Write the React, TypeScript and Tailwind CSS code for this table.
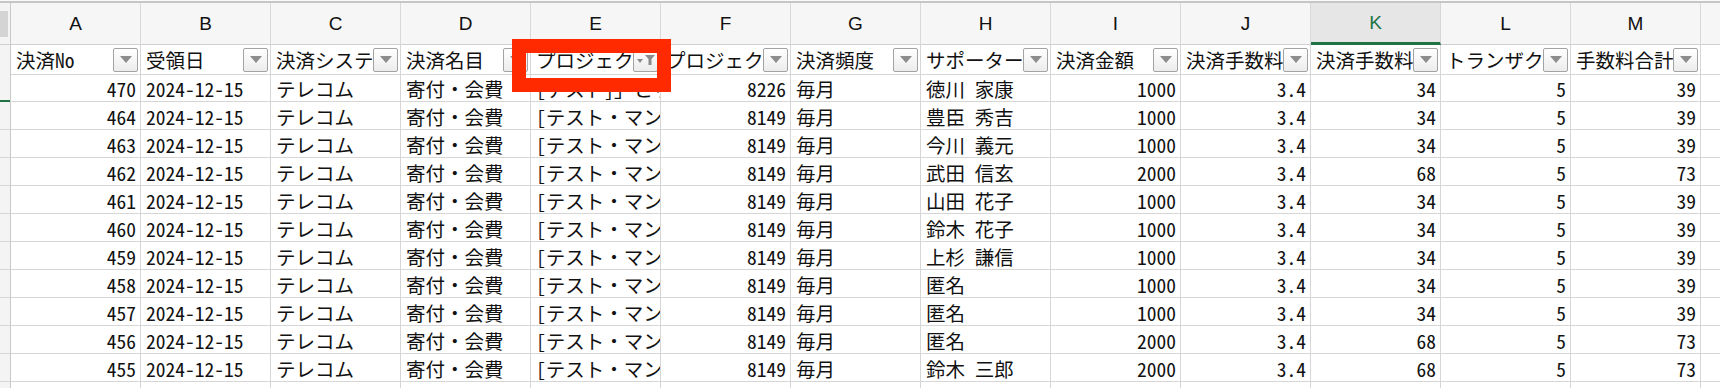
import React from 'react';

const LETTERS = ['A', 'B', 'C', 'D', 'E', 'F', 'G', 'H', 'I', 'J', 'K', 'L', 'M'];

const HEADERS = [
  '決済No',
  '受領日',
  '決済システム',
  '決済名目',
  'プロジェクト名',
  'プロジェクトID',
  '決済頻度',
  'サポーター名',
  '決済金額',
  '決済手数料率',
  '決済手数料',
  'トランザクション手数料',
  '手数料合計',
];

// true = right aligned (numbers)
const RIGHT = [true, false, false, false, false, true, false, false, true, true, true, true, true];

const NAMES = ['徳川　家康', '豊臣　秀吉', '今川　義元', '武田　信玄', '山田　花子', '鈴木　花子', '上杉　謙信', '匿名', '匿名', '匿名', '鈴木　三郎'];
const IDS = [470, 464, 463, 462, 461, 460, 459, 458, 457, 456, 455];
const AMOUNTS = [1000, 1000, 1000, 2000, 1000, 1000, 1000, 1000, 1000, 2000, 2000];

const rows = IDS.map((id, i) => {
  const amount = AMOUNTS[i];
  const fee = amount === 2000 ? 68 : 34;
  return [
    String(id),
    '2024-12-15',
    'テレコム',
    '寄付・会費',
    i === 0 ? '[テスト]」とりあえず' : '[テスト・マンスリー]',
    i === 0 ? '8226' : '8149',
    '毎月',
    NAMES[i],
    String(amount),
    '3.4',
    String(fee),
    '5',
    String(fee + 5),
  ];
});

const GRID = 'grid grid-cols-[11px_repeat(13,130px)_1fr]';
const CELL_FONT = "font-['Noto_Sans_CJK_JP',sans-serif] [font-feature-settings:'hwid'] text-[19.5px] text-[#111]";

function FilterButton({ active }: { active?: boolean }) {
  return (
    <div className="absolute right-[2px] top-[3px] w-[25px] h-[24px] rounded-[2px] border border-[#a3a3a3] bg-gradient-to-b from-white to-[#ececec] flex items-center justify-center">
      {active ? (
        <svg width="22" height="12" viewBox="0 0 22 12">
          <polygon points="2,5 8,5 5,9" fill="#8a8a8a" />
          <polygon points="10,1 20,1 16.5,5 16.5,11 13.5,11 13.5,5" fill="#8a8a8a" />
        </svg>
      ) : (
        <svg width="12" height="8" viewBox="0 0 12 8">
          <polygon points="0,0 12,0 6,7" fill="#8c8c8c" />
        </svg>
      )}
    </div>
  );
}

export default function App() {
  return (
    <div className="relative w-[1720px] h-[388px] overflow-hidden bg-white">
      {/* top strip */}
      <div className="h-[3px] bg-[#fafafa] border-b-2 border-[#c6c6c6]" />

      {/* column letters */}
      <div className={`${GRID} h-[42px]`}>
        <div className="bg-[#f4f4f4] border-r border-[#c9c9c9] border-b border-b-[#cfcfcf] flex items-center">
          <div className="w-[8px] h-[26px] bg-[#d4d4d4]" />
        </div>
        {LETTERS.map((l) =>
          l === 'K' ? (
            <div key={l} className="bg-[#e6e6e6] border-r border-[#d6d6d6] border-b-[3px] border-b-[#217346] flex items-center justify-center font-['Liberation_Sans',sans-serif] text-[19px] text-[#217346] pt-[1px]">
              {l}
            </div>
          ) : (
            <div key={l} className="bg-[#f6f6f6] border-r border-[#d9d9d9] border-b border-b-[#cfcfcf] flex items-center justify-center font-['Liberation_Sans',sans-serif] text-[19px] text-[#111] pt-[1px]">
              {l}
            </div>
          )
        )}
        <div className="bg-[#f6f6f6] border-b border-[#cfcfcf]" />
      </div>

      {/* header row with filters */}
      <div className={`${GRID} h-[29px]`}>
        <div className="bg-[#f4f4f4] border-r border-[#c9c9c9] border-b border-b-[#d6d6d6]" />
        {HEADERS.map((h, i) => (
          <div key={h} className="relative border-r border-b border-[#d6d6d6] flex items-center">
            <div className={`w-[102px] overflow-hidden whitespace-nowrap pl-[5px] ${CELL_FONT}`}>{h}</div>
            <FilterButton active={i === 4} />
          </div>
        ))}
        <div className="border-b border-[#d6d6d6]" />
      </div>

      {/* data rows */}
      {rows.map((r, ri) => (
        <div key={ri} className={`${GRID} h-[28px]`}>
          <div className="relative bg-[#f4f4f4] border-r border-[#c9c9c9] border-b border-b-[#d6d6d6]">
            {ri === 0 && <div className="absolute left-0 right-0 bottom-[-2px] h-[3px] bg-[#217346]" />}
          </div>
          {r.map((v, ci) => (
            <div
              key={ci}
              className={`overflow-hidden whitespace-nowrap border-r border-b border-[#d6d6d6] flex items-center pt-[2px] ${RIGHT[ci] ? 'justify-end pr-[4px]' : 'pl-[5px]'} ${CELL_FONT}`}
            >
              {v}
            </div>
          ))}
          <div className="border-b border-[#d6d6d6]" />
        </div>
      ))}

      {/* partial row */}
      <div className={`${GRID} h-[28px]`}>
        <div className="bg-[#f4f4f4] border-r border-[#c9c9c9]" />
        {LETTERS.map((l) => (
          <div key={l} className="border-r border-[#d6d6d6]" />
        ))}
        <div />
      </div>

      {/* annotation box */}
      <div className="absolute left-[512px] top-[39px] w-[159px] h-[53px] border-[14px] border-[#ff2a00]" />
    </div>
  );
}
